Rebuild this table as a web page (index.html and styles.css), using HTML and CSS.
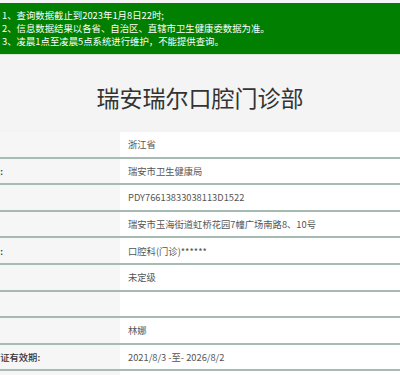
FILE: index.html
```html
<!DOCTYPE html>
<html lang="zh-CN">
<head>
<meta charset="utf-8">
<title>瑞安瑞尔口腔门诊部</title>
<link rel="stylesheet" href="styles.css">
</head>
<body>
<div class="notice">
  <p>1、查询数据截止到2023年1月8日22时;</p>
  <p>2、信息数据结果以各省、自治区、直辖市卫生健康委数据为准。</p>
  <p>3、凌晨1点至凌晨5点系统进行维护，不能提供查询。</p>
</div>
<h1 class="title">瑞安瑞尔口腔门诊部</h1>
<div class="table">
  <div class="row"><div class="label">省份:</div><div class="value">浙江省</div></div>
  <div class="row"><div class="label">登记机关:</div><div class="value">瑞安市卫生健康局</div></div>
  <div class="row"><div class="label">登记号:</div><div class="value">PDY76613833038113D1522</div></div>
  <div class="row"><div class="label">地址:</div><div class="value">瑞安市玉海街道虹桥花园7幢广场南路8、10号</div></div>
  <div class="row"><div class="label">诊疗科目:</div><div class="value">口腔科(门诊)******</div></div>
  <div class="row"><div class="label">等级:</div><div class="value">未定级</div></div>
  <div class="row"><div class="label">性质:</div><div class="value"></div></div>
  <div class="row"><div class="label">负责人:</div><div class="value">林娜</div></div>
  <div class="row"><div class="label">执业许可证有效期:</div><div class="value">2021/8/3 -至- 2026/8/2</div></div>
  <div class="row"><div class="label">备注:</div><div class="value"></div></div>
</div>
</body>
</html>
```
FILE: styles.css
```css
html, body {
  margin: 0;
  padding: 0;
  background: #f4f4f4;
  font-family: "Noto Sans CJK SC", "Noto Sans", sans-serif;
  overflow: hidden;
}

.notice {
  margin-top: 3px;
  background: #017f01;
  color: #ffffff;
  font-size: 9.4px;
  line-height: 13px;
  padding: 6px 2px;
  border-bottom: 1px solid #d4e6d4;
}

.notice p {
  margin: 0;
  white-space: nowrap;
}

.title {
  margin: 0;
  height: 77px;
  box-sizing: border-box;
  padding-top: 7px;
  display: flex;
  align-items: center;
  justify-content: center;
  font-size: 23px;
  font-weight: 400;
  color: #333333;
}

.table {
  margin-left: -49px;
  width: 460px;
}

.row {
  display: grid;
  grid-template-columns: 169px 1fr;
  height: 26.6px;
  box-sizing: border-box;
  border-bottom: 2px solid #a6bbb1;
  font-size: 9.3px;
}

.label {
  background: #f6f6f6;
  color: #333333;
  padding-left: 12px;
  display: flex;
  align-items: center;
  white-space: nowrap;
  font-weight: 500;
}

.value {
  background: #ffffff;
  color: #555555;
  padding-left: 8px;
  display: flex;
  align-items: center;
  white-space: nowrap;
}
```
